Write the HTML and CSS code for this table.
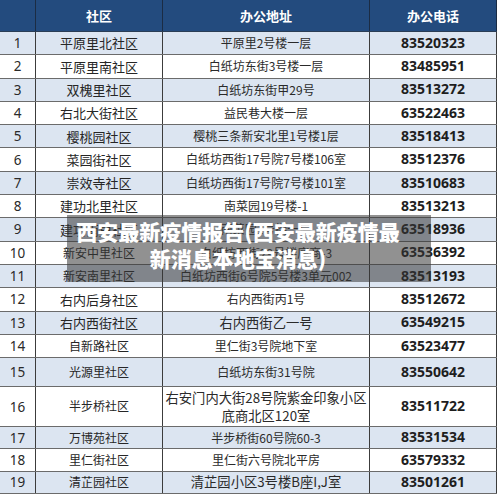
FILE: index.html
```html
<!DOCTYPE html>
<html lang="zh-CN">
<head>
<meta charset="utf-8">
<title>西安最新疫情报告</title>
<link rel="stylesheet" href="styles.css">
</head>
<body>
<div class="page">
  <div class="sheet">
    <div class="row head">
      <div class="cell"></div>
      <div class="cell">社区</div>
      <div class="cell">办公地址</div>
      <div class="cell">办公电话</div>
    </div>
    <div class="row odd">
      <div class="cell num">1</div>
      <div class="cell name">平原里北社区</div>
      <div class="cell addr">平原里2号楼一层</div>
      <div class="cell tel">83520323</div>
    </div>
    <div class="row">
      <div class="cell num">2</div>
      <div class="cell name">平原里南社区</div>
      <div class="cell addr">白纸坊东街3号楼一层</div>
      <div class="cell tel">83485951</div>
    </div>
    <div class="row odd">
      <div class="cell num">3</div>
      <div class="cell name">双槐里社区</div>
      <div class="cell addr">白纸坊东街甲29号</div>
      <div class="cell tel">83513272</div>
    </div>
    <div class="row">
      <div class="cell num">4</div>
      <div class="cell name">右北大街社区</div>
      <div class="cell addr">益民巷大楼一层</div>
      <div class="cell tel">63522463</div>
    </div>
    <div class="row odd">
      <div class="cell num">5</div>
      <div class="cell name">樱桃园社区</div>
      <div class="cell addr">樱桃三条新安北里1号楼1层</div>
      <div class="cell tel">83518413</div>
    </div>
    <div class="row">
      <div class="cell num">6</div>
      <div class="cell name">菜园街社区</div>
      <div class="cell addr">白纸坊西街17号院7号楼106室</div>
      <div class="cell tel">83512376</div>
    </div>
    <div class="row odd">
      <div class="cell num">7</div>
      <div class="cell name">崇效寺社区</div>
      <div class="cell addr">白纸坊西街17号院7号楼101室</div>
      <div class="cell tel">83510683</div>
    </div>
    <div class="row">
      <div class="cell num">8</div>
      <div class="cell name">建功北里社区</div>
      <div class="cell addr">南菜园19号楼-1</div>
      <div class="cell tel">83513213</div>
    </div>
    <div class="row odd">
      <div class="cell num">9</div>
      <div class="cell name">建功南里社区</div>
      <div class="cell addr">南菜园1号楼一层</div>
      <div class="cell tel">63518936</div>
    </div>
    <div class="row">
      <div class="cell num">10</div>
      <div class="cell name small">新安中里社区</div>
      <div class="cell addr">白纸坊西街29号楼底商-3</div>
      <div class="cell tel">63536392</div>
    </div>
    <div class="row odd">
      <div class="cell num">11</div>
      <div class="cell name small">新安南里社区</div>
      <div class="cell addr">白纸坊西街6号院5号楼3单元002</div>
      <div class="cell tel">83513193</div>
    </div>
    <div class="row">
      <div class="cell num">12</div>
      <div class="cell name">右内后身社区</div>
      <div class="cell addr">右内西街丙1号</div>
      <div class="cell tel">83512672</div>
    </div>
    <div class="row odd">
      <div class="cell num">13</div>
      <div class="cell name">右内西街社区</div>
      <div class="cell addr big">右内西街乙一号</div>
      <div class="cell tel">63549215</div>
    </div>
    <div class="row">
      <div class="cell num">14</div>
      <div class="cell name small">自新路社区</div>
      <div class="cell addr">里仁街3号院地下室</div>
      <div class="cell tel">63523477</div>
    </div>
    <div class="row odd tall">
      <div class="cell num">15</div>
      <div class="cell name small">光源里社区</div>
      <div class="cell addr">白纸坊东街31号院</div>
      <div class="cell tel">83550642</div>
    </div>
    <div class="row double">
      <div class="cell num">16</div>
      <div class="cell name small">半步桥社区</div>
      <div class="cell addr big">右安门内大街28号院紫金印象小区底商北区120室</div>
      <div class="cell tel">83511722</div>
    </div>
    <div class="row odd short">
      <div class="cell num">17</div>
      <div class="cell name small">万博苑社区</div>
      <div class="cell addr">半步桥街60号院60-3</div>
      <div class="cell tel">83531534</div>
    </div>
    <div class="row short">
      <div class="cell num">18</div>
      <div class="cell name small">里仁街社区</div>
      <div class="cell addr">里仁街六号院北平房</div>
      <div class="cell tel">63579332</div>
    </div>
    <div class="row odd short">
      <div class="cell num">19</div>
      <div class="cell name small">清芷园社区</div>
      <div class="cell addr big">清芷园小区3号楼B座I,J室</div>
      <div class="cell tel">83501261</div>
    </div>
  </div>
  <div class="caption">西安最新疫情报告(西安最新疫情最新消息本地宝消息)</div>
</div>
</body>
</html>
```

FILE: styles.css
```css
html, body {
  margin: 0;
  padding: 0;
  background: #ffffff;
}

body {
  font-family: "Noto Sans CJK SC", "Noto Sans", sans-serif;
  color: #222222;
}

.page {
  position: relative;
  width: 500px;
  height: 497px;
  overflow: hidden;
}

.sheet {
  width: 497px;
  display: flex;
  flex-direction: column;
}

.row {
  display: grid;
  grid-template-columns: 36px 127px 207px 127px;
  height: 23.3px;
  box-sizing: border-box;
  border-bottom: 1px solid #6b6b6b;
  background: #ffffff;
}

.row.odd {
  background: #dce5f1;
}

.row.head {
  height: 32px;
  background: #234b7e;
  color: #ffffff;
  font-weight: 700;
  font-size: 13px;
  border-bottom: 1px solid #2a3d55;
}

.row.tall {
  height: 29px;
}

.row.double {
  height: 40px;
}

.row.short {
  height: 22.3px;
}

.cell {
  display: flex;
  align-items: center;
  justify-content: center;
  text-align: center;
  border-right: 1px solid #3c3c3c;
  overflow: hidden;
  white-space: nowrap;
  line-height: 1.2;
}

.head .cell {
  border-right-color: #1b2c44;
}

.num {
  font-family: "Noto Sans", sans-serif;
  font-size: 13.5px;
  color: #2a2a2a;
}

.name {
  font-size: 13px;
  color: #262626;
}

.name.small {
  font-size: 12px;
}

.addr {
  font-size: 12px;
  color: #2a2a2a;
}

.addr.big {
  font-size: 13.3px;
}

.double .addr {
  white-space: normal;
  line-height: 18px;
  padding: 0 2px;
}

.tel {
  font-family: "Noto Sans", sans-serif;
  font-weight: 700;
  font-size: 14px;
  color: #1e1e1e;
}

.caption {
  position: absolute;
  left: 67px;
  top: 215px;
  width: 364px;
  height: 67px;
  box-sizing: border-box;
  padding: 3px 28px 0 6px;
  background: rgba(55, 55, 55, 0.55);
  color: #ffffff;
  font-family: "Noto Sans CJK SC", "Noto Sans", sans-serif;
  font-weight: 900;
  font-size: 21px;
  line-height: 27px;
  text-align: center;
}
```
